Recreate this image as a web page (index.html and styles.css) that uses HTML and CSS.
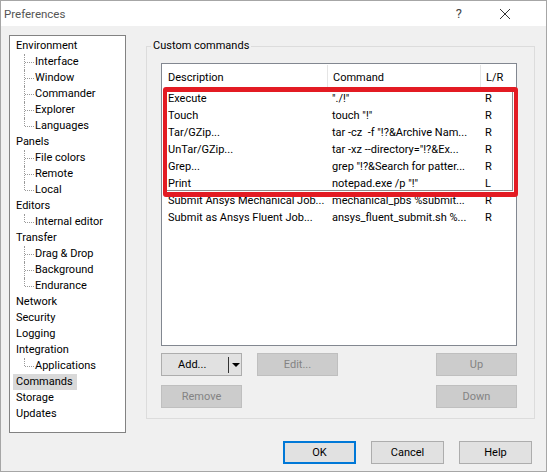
FILE: index.html
```html
<!DOCTYPE html>
<html>
<head>
<meta charset="utf-8">
<link rel="stylesheet" href="styles.css">
</head>
<body>
<div class="window">
  <div class="titlebar">
    <span class="title">Preferences</span>
    <span class="help-glyph">?</span>
    <svg class="close" width="12" height="12" viewBox="0 0 12 12"><path d="M1 1 L11 11 M11 1 L1 11" stroke="#333" stroke-width="1"/></svg>
  </div>
  <div class="client">
    <div class="top">
      <ul class="tree">
        <li class="node">Environment</li>
        <li class="child">Interface</li>
        <li class="child">Window</li>
        <li class="child">Commander</li>
        <li class="child">Explorer</li>
        <li class="child last">Languages</li>
        <li class="node">Panels</li>
        <li class="child">File colors</li>
        <li class="child">Remote</li>
        <li class="child last">Local</li>
        <li class="node">Editors</li>
        <li class="child last">Internal editor</li>
        <li class="node">Transfer</li>
        <li class="child">Drag &amp; Drop</li>
        <li class="child">Background</li>
        <li class="child last">Endurance</li>
        <li class="node">Network</li>
        <li class="node">Security</li>
        <li class="node">Logging</li>
        <li class="node">Integration</li>
        <li class="child last">Applications</li>
        <li class="node"><span class="selected">Commands</span></li>
        <li class="node">Storage</li>
        <li class="node">Updates</li>
      </ul>
      <fieldset class="group">
        <legend>Custom commands</legend>
        <div class="list">
          <div class="row header">
            <span class="c1">Description</span><span class="c2">Command</span><span class="c3">L/R</span>
          </div>
          <div class="row"><span class="c1">Execute</span><span class="c2">"./!"</span><span class="c3">R</span></div>
          <div class="row"><span class="c1">Touch</span><span class="c2">touch "!"</span><span class="c3">R</span></div>
          <div class="row"><span class="c1">Tar/GZip...</span><span class="c2">tar -cz &nbsp;-f "!?&amp;Archive Nam...</span><span class="c3">R</span></div>
          <div class="row"><span class="c1">UnTar/GZip...</span><span class="c2">tar -xz --directory="!?&amp;Ex...</span><span class="c3">R</span></div>
          <div class="row"><span class="c1">Grep...</span><span class="c2">grep "!?&amp;Search for patter...</span><span class="c3">R</span></div>
          <div class="row"><span class="c1">Print</span><span class="c2">notepad.exe /p "!"</span><span class="c3">L</span></div>
          <div class="row"><span class="c1">Submit Ansys Mechanical Job...</span><span class="c2">mechanical_pbs %submit...</span><span class="c3">R</span></div>
          <div class="row"><span class="c1">Submit as Ansys Fluent Job...</span><span class="c2">ansys_fluent_submit.sh %...</span><span class="c3">R</span></div>
          <div class="highlight"></div>
        </div>
        <div class="btnrow">
          <button class="btn split">Add...<span class="sep"></span><span class="arrow"></span></button>
          <button class="btn disabled">Edit...</button>
          <span class="spacer"></span>
          <button class="btn disabled">Up</button>
        </div>
        <div class="btnrow second">
          <button class="btn disabled">Remove</button>
          <span class="spacer"></span>
          <button class="btn disabled">Down</button>
        </div>
      </fieldset>
    </div>
    <div class="footer">
      <button class="btn dlg default">OK</button>
      <button class="btn dlg">Cancel</button>
      <button class="btn dlg">Help</button>
    </div>
  </div>
</div>
</body>
</html>
```
FILE: styles.css
```css
* { box-sizing: border-box; }
html, body { margin: 0; padding: 0; background: #fff; }
body {
  font-family: Roboto, "Noto Sans", sans-serif;
  font-size: 11px;
  color: #000;
}
.window {
  width: 547px;
  height: 472px;
  border: 1px solid #a6a6a6;
  display: flex;
  flex-direction: column;
  background: #f0f0f0;
}
.titlebar {
  height: 25px;
  background: #fff;
  display: flex;
  align-items: center;
  padding-left: 3px;
  color: #555;
  flex: none;
}
.title { font-size: 11.5px; flex: 1; }
.help-glyph { font-size: 13px; color: #444; margin-right: 37px; }
.close { margin-right: 35px; }
.client {
  flex: 1;
  padding: 9px 8px 0 8px;
  display: flex;
  flex-direction: column;
}
.top { display: flex; align-items: flex-start; }
.tree {
  list-style: none;
  margin: 0;
  padding: 2px 0 0 0;
  width: 117px;
  height: 398px;
  background: #fff;
  border: 1px solid #828282;
  flex: none;
}
.tree li {
  height: 16px;
  line-height: 16px;
  white-space: nowrap;
  position: relative;
}
.tree .node { padding-left: 6px; }
.tree .child { padding-left: 25px; }
.tree .child::before {
  content: "";
  position: absolute;
  left: 14px;
  top: 0;
  height: 16px;
  border-left: 1px dotted #9a9a9a;
}
.tree .child.last::before { height: 8px; }
.tree .child::after {
  content: "";
  position: absolute;
  left: 15px;
  top: 8px;
  width: 9px;
  border-top: 1px dotted #9a9a9a;
}
.selected {
  background: #d9d9d9;
  margin-left: -3px;
  padding: 0 4px 0 3px;
  display: inline-block;
}
.group {
  margin: 4px 0 0 20px;
  padding: 0 17px 10px 14px;
  width: 389px;
  height: 380px;
  border: 1px solid #dcdcdc;
  min-width: 0;
}
.group legend {
  padding: 0 2px;
  margin-left: -10px;
  line-height: 14px;
}
.list {
  position: relative;
  margin-top: 10px;
  padding-top: 1px;
  width: 356px;
  height: 283px;
  background: #fff;
  border: 1px solid #828790;
}
.row {
  display: flex;
  height: 17px;
  line-height: 17px;
  white-space: nowrap;
}
.row.header {
  height: 26px;
  line-height: 26px;
  margin-top: -1px;
  padding-top: 1px;
}
.row span { overflow: hidden; }
.c1 { width: 165px; padding-left: 6px; }
.c2 { width: 153px; padding-left: 5px; }
.c3 { flex: 1; padding-left: 5px; }
.header .c2, .header .c3 { border-left: 1px solid #e5e5e5; }
.highlight {
  position: absolute;
  left: 1px;
  top: 23px;
  width: 355px;
  height: 110px;
  border: 4px solid #e31b23;
  border-top-width: 5px;
  border-bottom-width: 5px;
  border-radius: 3px;
  box-shadow: inset -1px -1px 0 #fff, inset -2px -2px 0 #8c8c8c;
}
.btnrow {
  display: flex;
  margin-top: 7px;
  width: 356px;
}
.btnrow.second { margin-top: 9px; }
.spacer { flex: 1; }
.btn {
  font-family: inherit;
  font-size: 11px;
  width: 81px;
  height: 23px;
  padding: 0;
  background: #e1e1e1;
  border: 1px solid #adadad;
  color: #000;
  position: relative;
}
.btn + .btn.disabled { margin-left: 15px; }
.btn.disabled {
  background: #cccccc;
  border-color: #bfbfbf;
  color: #838383;
}
.btn.split { text-align: left; padding-left: 16px; }
.split .sep {
  position: absolute;
  left: 66px;
  top: 3px;
  height: 16px;
  border-left: 1px solid #333;
}
.split .arrow {
  position: absolute;
  left: 70px;
  top: 9px;
  width: 0;
  height: 0;
  border-left: 4px solid transparent;
  border-right: 4px solid transparent;
  border-top: 4px solid #000;
}
.footer {
  display: flex;
  justify-content: flex-end;
  gap: 15px;
  padding: 0 6px 0 0;
  margin-top: 8px;
}
.btn.dlg { width: 73px; }
.btn.default { border: 1px solid #0078d7; box-shadow: inset 0 0 0 1px #0078d7; }
```
